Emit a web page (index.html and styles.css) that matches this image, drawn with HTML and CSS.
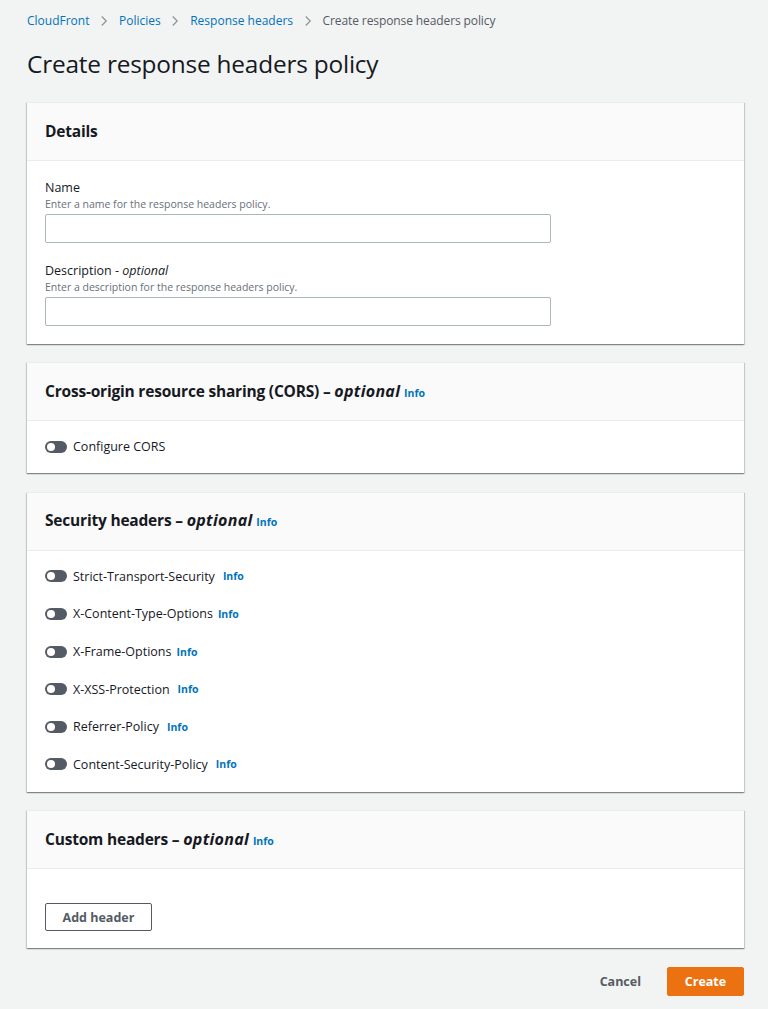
FILE: index.html
```html
<!DOCTYPE html>
<html>
<head>
<meta charset="utf-8">
<link rel="stylesheet" href="styles.css">
</head>
<body>
<div class="page">
  <nav class="crumbs">
    <a class="crumb-link">CloudFront</a>
    <svg class="chev" viewBox="0 0 16 16"><path d="M5 2l6 6-6 6" fill="none" stroke="#879596" stroke-width="1.6"/></svg>
    <a class="crumb-link">Policies</a>
    <svg class="chev" viewBox="0 0 16 16"><path d="M5 2l6 6-6 6" fill="none" stroke="#879596" stroke-width="1.6"/></svg>
    <a class="crumb-link">Response headers</a>
    <svg class="chev" viewBox="0 0 16 16"><path d="M5 2l6 6-6 6" fill="none" stroke="#879596" stroke-width="1.6"/></svg>
    <span class="crumb-current">Create response headers policy</span>
  </nav>
  <h1 class="title">Create response headers policy</h1>

  <section class="card">
    <div class="card-head"><h2>Details</h2></div>
    <div class="card-body details">
      <div class="field">
        <div class="label">Name</div>
        <div class="hint">Enter a name for the response headers policy.</div>
        <input class="input" type="text">
      </div>
      <div class="field">
        <div class="label">Description - <i>optional</i></div>
        <div class="hint">Enter a description for the response headers policy.</div>
        <input class="input" type="text">
      </div>
    </div>
  </section>

  <section class="card">
    <div class="card-head"><h2>Cross-origin resource sharing (CORS) – <i>optional</i> <a class="info">Info</a></h2></div>
    <div class="card-body toggles">
      <div class="toggle-row"><span class="toggle"></span><span class="toggle-label">Configure CORS</span></div>
    </div>
  </section>

  <section class="card">
    <div class="card-head"><h2>Security headers – <i>optional</i> <a class="info">Info</a></h2></div>
    <div class="card-body toggles list">
      <div class="toggle-row"><span class="toggle"></span><span class="toggle-label">Strict-Transport-Security</span><a class="info wide">Info</a></div>
      <div class="toggle-row"><span class="toggle"></span><span class="toggle-label">X-Content-Type-Options</span><a class="info">Info</a></div>
      <div class="toggle-row"><span class="toggle"></span><span class="toggle-label">X-Frame-Options</span><a class="info">Info</a></div>
      <div class="toggle-row"><span class="toggle"></span><span class="toggle-label">X-XSS-Protection</span><a class="info wide">Info</a></div>
      <div class="toggle-row"><span class="toggle"></span><span class="toggle-label">Referrer-Policy</span><a class="info wide">Info</a></div>
      <div class="toggle-row"><span class="toggle"></span><span class="toggle-label">Content-Security-Policy</span><a class="info wide">Info</a></div>
    </div>
  </section>

  <section class="card">
    <div class="card-head"><h2>Custom headers – <i>optional</i> <a class="info">Info</a></h2></div>
    <div class="card-body custom">
      <button class="btn-normal">Add header</button>
    </div>
  </section>

  <div class="actions">
    <button class="btn-link">Cancel</button>
    <button class="btn-primary">Create</button>
  </div>
</div>
</body>
</html>
```
FILE: styles.css
```css
* { box-sizing: border-box; }
html, body { margin: 0; padding: 0; }
body {
  background: #f2f3f3;
  font-family: "Open Sans", "Noto Sans", Arial, sans-serif;
  color: #16191f;
}
.page {
  padding: 12px 24px 14px 27px;
}
.crumbs {
  display: flex;
  align-items: center;
  height: 17px;
  font-size: 12px;
}
.crumb-link { color: #0073bb; }
.crumb-current { color: #545b64; letter-spacing: -0.1px; }
.chev { width: 12px; height: 12px; margin: 0 9px 0 8.5px; }
.title {
  margin: 17px 0 0 0;
  font-size: 24.4px;
  font-weight: 400;
  line-height: 36px;
  letter-spacing: -0.2px;
}
.card {
  background: #fff;
  margin-top: 18px;
  box-shadow: 0 1px 1px 0 rgba(0,28,36,0.3), 1px 1px 1px 0 rgba(0,28,36,0.15), -1px 1px 1px 0 rgba(0,28,36,0.15);
  border-top: 1px solid #eaeded;
}
.title + .card { margin-top: 20px; }
.card-head {
  background: #fafafa;
  border-bottom: 1px solid #eaeded;
  height: 58px;
  display: flex;
  align-items: center;
  padding: 0 18px 2px 18px;
}
.card-head h2 {
  margin: 0;
  font-size: 15.5px;
  font-weight: 700;
  letter-spacing: -0.2px;
}
.card-head h2 i { font-weight: 700; letter-spacing: 0.3px; font-size: 16px; }
.info {
  color: #0073bb;
  font-size: 10.5px;
  font-weight: 700;
  letter-spacing: 0;
}
.card-body { padding: 0 18px; }
.details { padding-top: 19px; padding-bottom: 18px; display: flex; flex-direction: column; gap: 20px; }
.label { font-size: 12.5px; line-height: 16px; color: #16191f; }
.hint { font-size: 10.5px; line-height: 16px; color: #687078; }
.input {
  display: block;
  width: 506px;
  height: 29px;
  margin-top: 2px;
  border: 1px solid #aab7b8;
  border-radius: 2px;
  background: #fff;
}
.toggles { padding-top: 7px; padding-bottom: 7px; }
.toggles.list { padding-bottom: 9px; }
.card:nth-of-type(3) { margin-top: 19px; }
.toggle-row {
  display: flex;
  align-items: center;
  height: 37.6px;
}
.toggle {
  width: 22px;
  height: 12px;
  border-radius: 6px;
  background: #545b64;
  position: relative;
  flex-shrink: 0;
}
.toggle::after {
  content: "";
  position: absolute;
  left: 2px;
  top: 2px;
  width: 8px;
  height: 8px;
  border-radius: 50%;
  background: #fff;
}
.toggle-label {
  margin-left: 6px;
  font-size: 12.5px;
  color: #16191f;
}
.toggle-row .info { margin-left: 5px; }
.toggle-row .info.wide { margin-left: 8px; }
.custom { padding-top: 34px; padding-bottom: 17px; }
.btn-normal {
  font-family: inherit;
  height: 28px;
  width: 107px;
  background: #fff;
  border: 1px solid #545b64;
  border-radius: 2px;
  color: #545b64;
  font-weight: 700;
  font-size: 12.5px;
}
.actions {
  display: flex;
  justify-content: flex-end;
  align-items: center;
  margin-top: 19px;
  gap: 6px;
}
.btn-link {
  font-family: inherit;
  background: none;
  border: none;
  color: #545b64;
  font-weight: 700;
  font-size: 12.5px;
  padding: 0 20px;
  height: 28px;
}
.btn-primary {
  font-family: inherit;
  background: #ec7211;
  border: 1px solid #ec7211;
  border-radius: 2px;
  color: #fff;
  font-weight: 700;
  font-size: 12.5px;
  width: 77px;
  height: 29px;
}
```
